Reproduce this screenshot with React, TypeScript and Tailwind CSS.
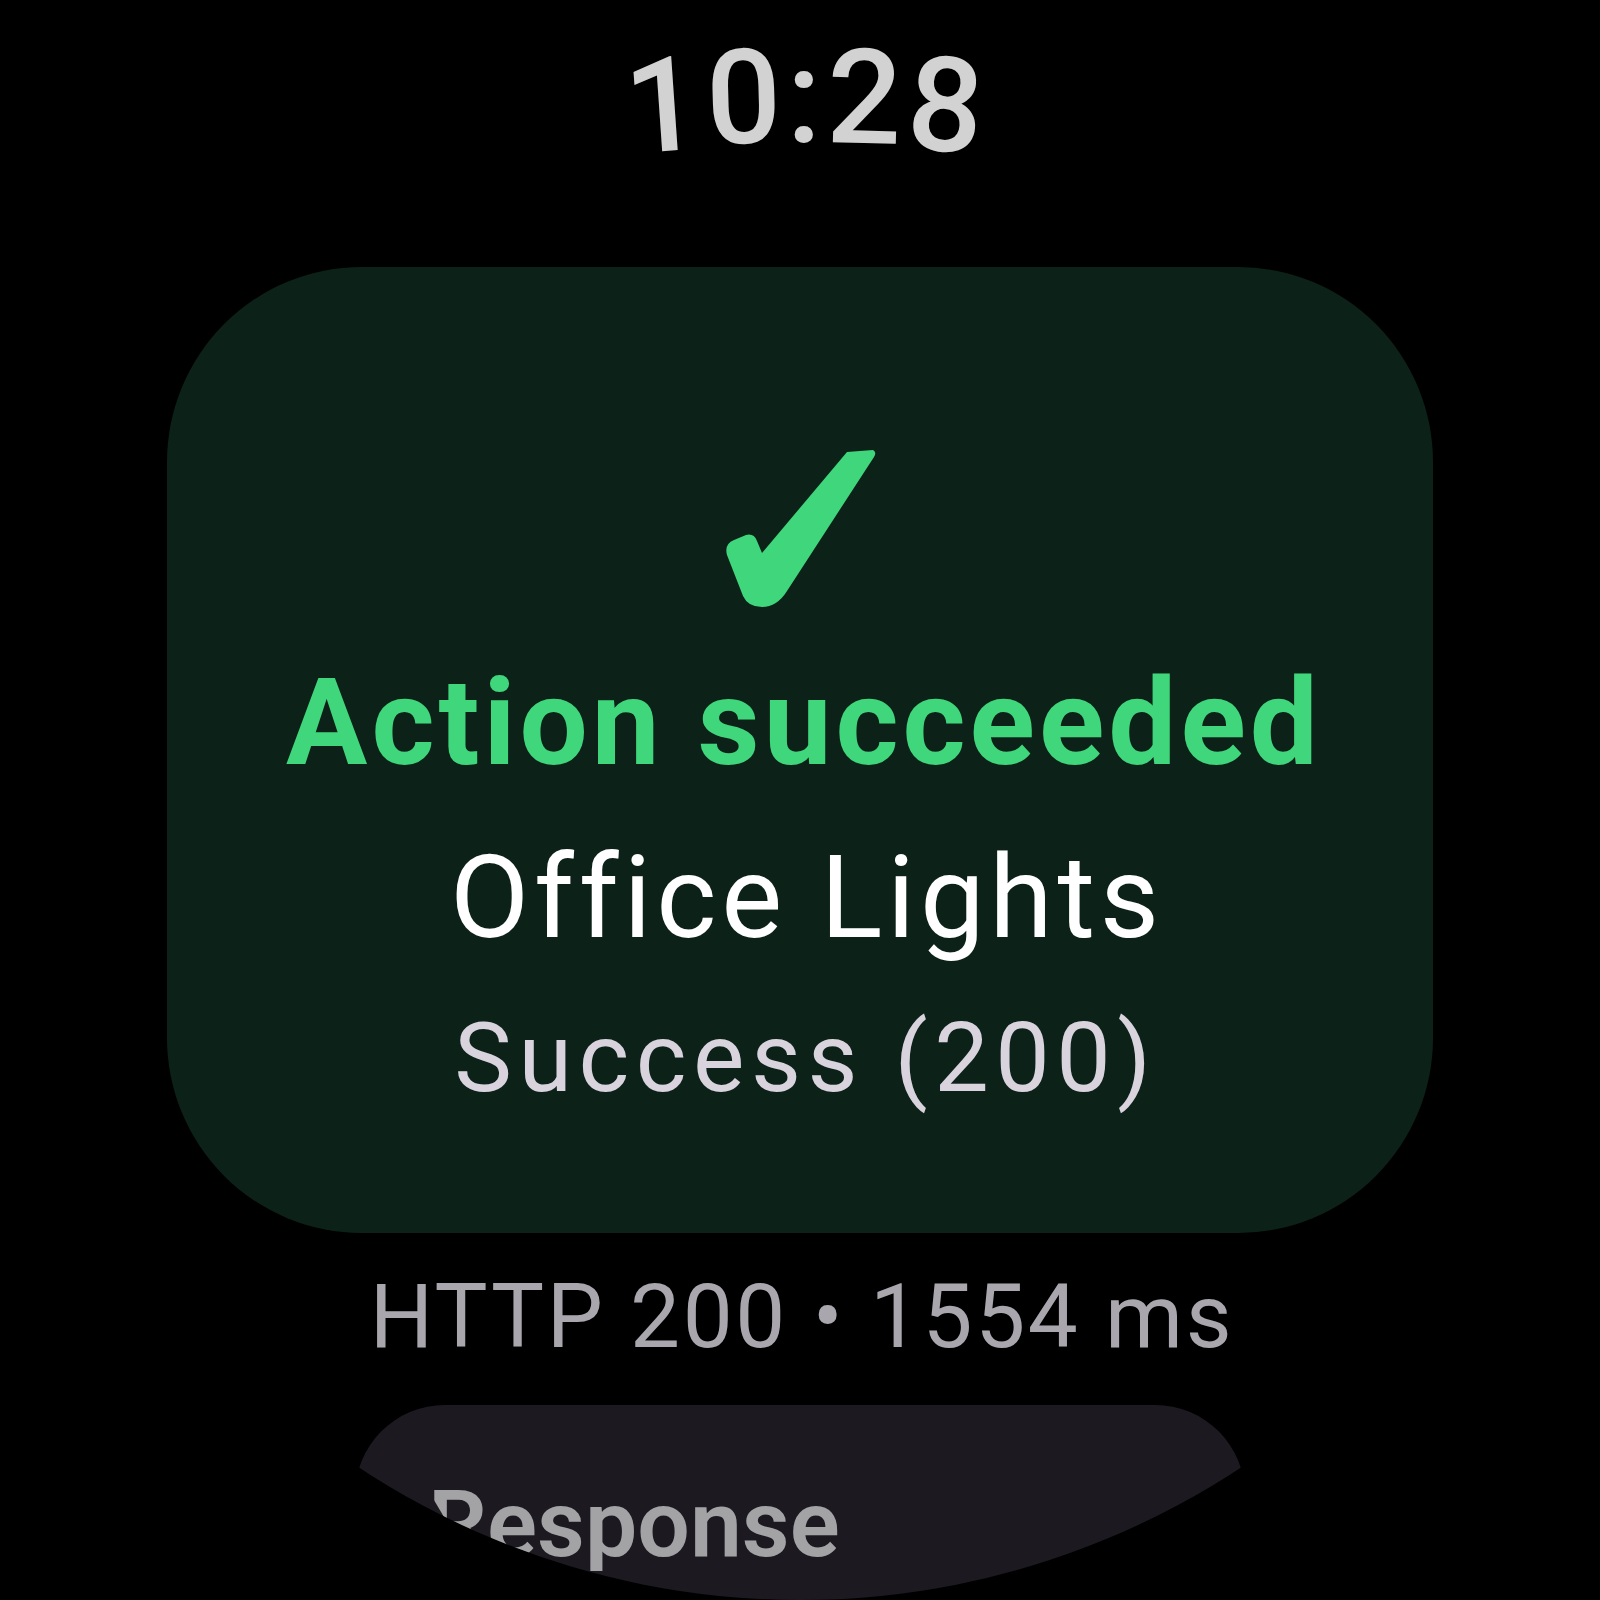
import React from "react";

function Check() {
  return (
    <svg width="152" height="158" viewBox="0 0 152 158" className="block">
      <path
        d="M123,3 L149,1 Q153,3 150,8 L63,142 Q53,158 38,158 Q24,158 19,147 L3,106 Q0,95 10,91 L22,86 Q30,84 33,92 L38,104 Z"
        fill="#40d67c"
      />
    </svg>
  );
}

export default function App() {
  return (
    <div className="w-[1600px] h-[1600px] bg-black overflow-hidden">
      <div
        className="w-[1600px] h-[1600px] rounded-full overflow-hidden bg-black flex flex-col items-center"
        style={{ fontFamily: "Roboto, 'Noto Sans', sans-serif" }}
      >
        <div className="mt-[45px] text-[132px] leading-[110px] font-medium text-[#d2d2d2] flex gap-[6px] pl-[8px]">
          <span className="inline-block rotate-[-4deg] translate-y-[6px]">1</span>
          <span className="inline-block rotate-[-1.5deg] translate-y-[-2px]">0</span>
          <span className="inline-block translate-y-[-3px]">:</span>
          <span className="inline-block rotate-[1.5deg] translate-y-[-2px]">2</span>
          <span className="inline-block rotate-[4deg] translate-y-[6px]">8</span>
        </div>

        <div className="mt-[112px] w-[1266px] h-[966px] rounded-[195px] bg-[#0c2218] flex flex-col items-center shrink-0">
          <div className="mt-[182px]">
            <Check />
          </div>
          <div className="mt-[56px] text-[121px] leading-none font-bold text-[#40d67c] tracking-[4px] pl-[8px]">
            Action succeeded
          </div>
          <div className="mt-[56px] text-[115px] leading-none text-white tracking-[4.8px] pl-[14px]">
            Office Lights
          </div>
          <div className="mt-[55px] text-[97px] leading-none text-[#d9d3de] tracking-[6.5px] pl-[12px]">
            Success (200)
          </div>
        </div>

        <div className="mt-[39px] text-[89px] leading-none text-[#a9a7ad] tracking-[2.6px] pl-[4px]">
          HTTP 200 • 1554 ms
        </div>

        <div className="mt-[44px] w-[890px] h-[400px] shrink-0 rounded-t-[90px] bg-[#1c1a20] pl-[73px] pt-[73px]">
          <div className="text-[93px] leading-none font-semibold text-[#a3a3a6] [clip-path:polygon(0_0,100%_0,100%_100%,48px_100%,0_12px)]">
            Response
          </div>
        </div>
      </div>
    </div>
  );
}
